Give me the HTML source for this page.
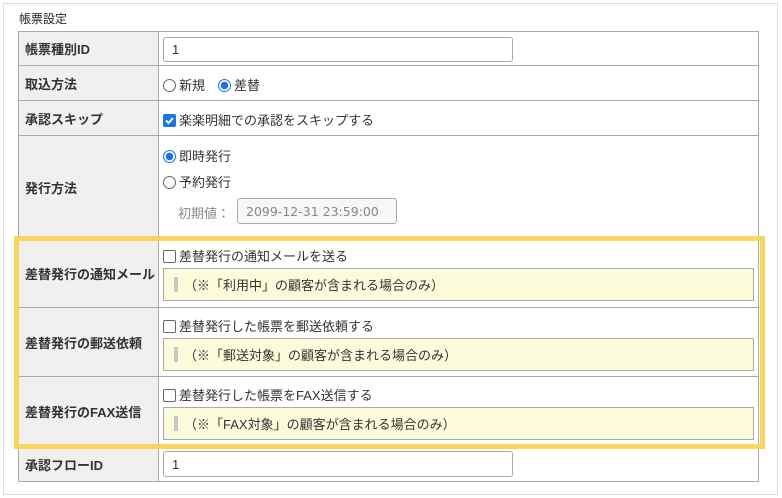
<!DOCTYPE html>
<html><head><meta charset="utf-8"><style>
*{box-sizing:border-box;margin:0;padding:0}
body{width:782px;height:498px;background:#fff;font-family:"Liberation Sans","Noto Sans CJK JP",sans-serif;font-size:13px;color:#333;position:relative;overflow:hidden}
.panel{position:absolute;left:3px;top:3px;width:775px;height:492px;border:1px solid #ddd}
.title{position:absolute;left:19px;top:10px;font-size:12px;color:#222}
.abs{position:absolute}
.lab{position:absolute;left:18px;width:141px;background:#f0f0f0;border:1px solid #aaa;font-weight:bold;padding-left:6px;display:flex;align-items:center}
.val{position:absolute;left:158px;width:601px;border:1px solid #aaa;background:#fff}
.inp{position:absolute;border:1px solid #aaa;border-radius:3px;background:#fff;padding-left:8px;display:flex;align-items:center}
.radio{display:inline-block;width:13px;height:13px;border:1px solid #666;border-radius:50%;vertical-align:-2px;margin-right:3px}
.radio.on{border:1px solid #1a73e8;background:radial-gradient(circle,#1a73e8 0 3.5px,#fff 4px)}
.cb{display:inline-block;width:13px;height:13px;border:1px solid #666;border-radius:2px;vertical-align:-2px;margin-right:3px}
.cb.on{background:#1a73e8;border-color:#1a73e8;position:relative}
.note{position:absolute;left:163px;width:591px;height:33px;background:#fcfcdc;border:1px solid #aaa;display:flex;align-items:center;padding-left:10px}
.note i{display:inline-block;width:4px;height:15px;background:#c8c8c8;margin-right:6px}
.yb{position:absolute;left:14px;top:236px;width:751px;height:213px;border:5px solid #f8d55c}
</style></head><body>
<div class="panel"></div>
<div class="title">帳票設定</div>

<div class="lab" style="top:31px;height:35px">帳票種別ID</div>
<div class="val" style="top:31px;height:35px"></div>
<div class="inp" style="left:163px;top:37px;width:350px;height:25px">1</div>

<div class="lab" style="top:65px;height:36px">取込方法</div>
<div class="val" style="top:65px;height:36px"></div>
<div class="abs" style="left:163px;top:75px"><span class="radio"></span>新規<span style="display:inline-block;width:13px"></span><span class="radio on"></span>差替</div>

<div class="lab" style="top:100px;height:36px">承認スキップ</div>
<div class="val" style="top:100px;height:36px"></div>
<div class="abs" style="left:163px;top:110px"><span class="cb on"><svg width="11" height="11" viewBox="0 0 11 11" style="position:absolute;left:0;top:0"><path d="M2 5.5l2.5 2.5 4.5-5" stroke="#fff" stroke-width="2" fill="none"/></svg></span>楽楽明細での承認をスキップする</div>

<div class="lab" style="top:135px;height:104px">発行方法</div>
<div class="val" style="top:135px;height:104px"></div>
<div class="abs" style="left:163px;top:146px"><span class="radio on"></span>即時発行</div>
<div class="abs" style="left:163px;top:172px"><span class="radio"></span>予約発行</div>
<div class="abs" style="left:178px;top:203px;color:#888">初期値：</div>
<div class="inp" style="left:237px;top:198px;width:160px;height:26px;background:#f7f7f7;color:#888;font-family:'DejaVu Sans','Liberation Sans',sans-serif;font-size:12.5px">2099-12-31 23:59:00</div>

<div class="lab" style="top:238px;height:70px">差替発行の通知メール</div>
<div class="val" style="top:238px;height:70px"></div>
<div class="abs" style="left:163px;top:246px"><span class="cb"></span>差替発行の通知メールを送る</div>
<div class="note" style="top:268px"><i></i>（※「利用中」の顧客が含まれる場合のみ）</div>

<div class="lab" style="top:307px;height:70px">差替発行の郵送依頼</div>
<div class="val" style="top:307px;height:70px"></div>
<div class="abs" style="left:163px;top:316px"><span class="cb"></span>差替発行した帳票を郵送依頼する</div>
<div class="note" style="top:338px"><i></i>（※「郵送対象」の顧客が含まれる場合のみ）</div>

<div class="lab" style="top:376px;height:71px">差替発行のFAX送信</div>
<div class="val" style="top:376px;height:71px"></div>
<div class="abs" style="left:163px;top:385px"><span class="cb"></span>差替発行した帳票をFAX送信する</div>
<div class="note" style="top:407px"><i></i>（※「FAX対象」の顧客が含まれる場合のみ）</div>

<div class="lab" style="top:446px;height:36px">承認フローID</div>
<div class="val" style="top:446px;height:36px"></div>
<div class="inp" style="left:163px;top:451px;width:350px;height:26px">1</div>

<div class="yb"></div>
</body></html>
